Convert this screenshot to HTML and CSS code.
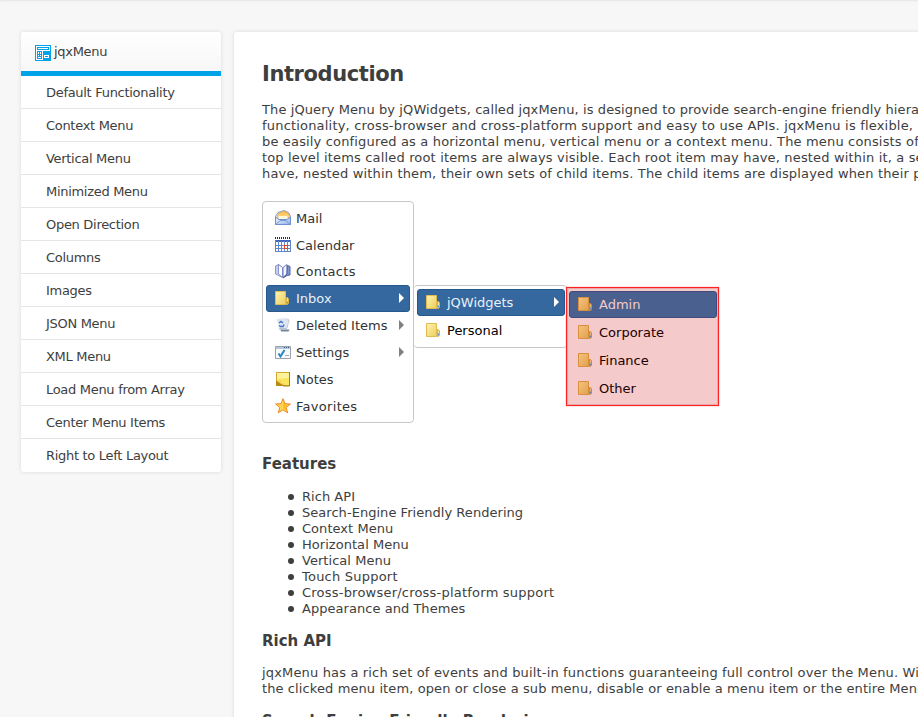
FILE: index.html
```html
<!DOCTYPE html>
<html lang="en">
<head>
<meta charset="utf-8">
<title>jqxMenu</title>
<link rel="stylesheet" href="styles.css">
</head>
<body>
<svg class="defs" width="0" height="0" aria-hidden="true">
  <defs>
    <linearGradient id="gold" x2="1" y2="1"><stop offset="0" stop-color="#fff3b0"/><stop offset="1" stop-color="#ecce5c"/></linearGradient>
    <linearGradient id="orange" x2="1" y2="1"><stop offset="0" stop-color="#f6c283"/><stop offset="1" stop-color="#e2a04a"/></linearGradient>
    <linearGradient id="blue" x2="1" y2="1"><stop offset="0" stop-color="#f4f8ff"/><stop offset="1" stop-color="#8fb1e8"/></linearGradient>
    <linearGradient id="flap" x2="0" y2="1"><stop offset="0" stop-color="#ffb733"/><stop offset="1" stop-color="#fff0c0"/></linearGradient>
    <symbol id="folder" viewBox="0 0 16 16">
      <path d="M.5 1.500h10v13H.5z" fill="url(#gold)" stroke="#dfbb55"/>
      <path d="M11.500 7.500h1l1 1.500v4l-1 1.500h-1z" fill="#fae99a" stroke="#d8b04a"/>
      <path d="M12.500 11.500v2" stroke="#4a9ad8"/>
    </symbol>
    <symbol id="folder-orange" viewBox="0 0 16 16">
      <path d="M.5 1.500h10v13H.5z" fill="url(#orange)" stroke="#d88f3e"/>
      <path d="M11.500 7.500h1l1 1.500v4l-1 1.500h-1z" fill="#eebb7c" stroke="#cf8638"/>
      <path d="M12.500 11.500v2" stroke="#5a7fa8"/>
    </symbol>
  </defs>
</svg>
<div class="page">
  <nav class="sidebar">
    <div class="sidebar-head">
      <svg width="16" height="16" viewBox="0 0 16 16" shape-rendering="crispEdges"><path fill="#00a2e8" d="M0 0h16v16H0z"/><path fill="#fff" d="M1 1h14v5h-14zM1 6h7v9h-7zM9 9h6v5H9z"/><path fill="#00a2e8" d="M2 2h12v3H2zM2 6h5v8H2zM8 9h7v5H8z"/><path fill="#fff" d="M3 3h10v1H3zM3 7h1v2H3zM5 7h1v2H5zM3 10h1v1H3zM5 10h1v1H5zM3 12h3v1H3zM9 10h5v3H9z"/><path fill="#00a2e8" d="M10 11h3v1h-3z"/></svg>
      <span>jqxMenu</span>
    </div>
    <ul class="side-list">
      <li>Default Functionality</li>
      <li>Context Menu</li>
      <li>Vertical Menu</li>
      <li>Minimized Menu</li>
      <li>Open Direction</li>
      <li>Columns</li>
      <li>Images</li>
      <li>JSON Menu</li>
      <li>XML Menu</li>
      <li>Load Menu from Array</li>
      <li>Center Menu Items</li>
      <li>Right to Left Layout</li>
    </ul>
  </nav>
  <main class="content">
    <h1>Introduction</h1>
    <p class="intro"><span class="snug">The jQuery Menu by jQWidgets, called jqxMenu, is designed to provide search-engine friendly hierarchical</span><br><span class="roomy">functionality, cross-browser and cross-platform support and easy to use APIs. jqxMenu is flexible, and can</span><br>be easily configured as a horizontal menu, vertical menu or a context menu. The menu consists of items<br>top level items called root items are always visible. Each root item may have, nested within it, a set of<br>have, nested within them, their own sets of child items. The child items are displayed when their parent</p>
    <div class="menus">
      <ul class="menu root">
        <li><svg width="16" height="16" viewBox="0 0 16 16"><path d="M.5 6.500L3 2.500 9 .5l4.500 2 2 4v8H.5z" fill="#dce8fb" stroke="#7d97d3"/><path d="M2 7l2-4 5-2 4 2 1.500 4L8 11z" fill="url(#flap)" stroke="#e5a648" stroke-width=".6"/><path d="M4 6h8l1 3H3z" fill="#fff6dc"/><path d="M.5 7L4 9.500h8L15.500 7v7.500H.5z" fill="url(#blue)" stroke="#6f8fd0"/><path d="M1.500 14L5 10.500h6L14.500 14" fill="none" stroke="#7796d6"/></svg><span>Mail</span></li>
        <li><svg width="16" height="16" viewBox="0 0 16 16" shape-rendering="crispEdges"><path fill="#fff" d="M0 1h16v14H0z"/><path d="M0 1h16" stroke="#333" stroke-width="2" stroke-dasharray="1 1"/><path fill="#3d68ba" d="M0 3h16v2H0z"/><path d="M.5 3v11.500h15V3M3.500 4v10M6.500 4v10M9.500 4v10M12.500 4v10M0 8.500h16M0 11.500h16" fill="none" stroke="#6286cb"/><path d="M9.500 8.500h3v3h-3z" fill="#fff" stroke="#e04a20"/></svg><span>Calendar</span></li>
        <li class="wide"><svg width="16" height="16" viewBox="0 0 16 16"><path d="M.5 3l3-1.500 4 3v10l-4-2-3-1.500z" fill="#c6d0ef" stroke="#8a94c6"/><path d="M3.500 1.500l4 3v10L3.500 11z" fill="#fff" stroke="#8793c8"/><path d="M8 4.500l4-3v9.500l-4 3.500z" fill="#eef3ff" stroke="#6e7bb8"/><path d="M12.500 2.500l2.500 1v8.500l-3 .5-4 2.500 4-4z" fill="#8195cd" stroke="#56619d"/></svg><span>Contacts</span></li>
        <li class="selected"><svg width="16" height="16"><use href="#folder"/></svg><span>Inbox</span><i class="arrow"></i></li>
        <li><svg width="16" height="16" viewBox="0 0 16 16"><path d="M1.500 2l9-1 3 1.500-2 11.500H5z" fill="#dfe6f0"/><path d="M6 12.500h8.500l-1 2H6z" fill="#75839a"/><path d="M4 11h8l-1 2H5z" fill="#b5c0d0"/><path d="M4 6l2-1.500L8 6M4 8.500l1.500 1H8l1-2" fill="none" stroke="#3e72cc" stroke-width="1.500"/><path d="M12 2l2 1-2 8" stroke="#c2c8ce" fill="none"/></svg><span>Deleted Items</span><i class="arrow"></i></li>
        <li><svg width="16" height="16" viewBox="0 0 16 16"><path d="M.5 2.500h15v12H.5z" fill="#f8fafc" stroke="#9da2a8"/><path d="M1 3h14v2H1z" fill="#b4c8e0"/><path d="M9 3.500h1m1 0h1m1 0h1" stroke="#38577e"/><path d="M3.500 9.500l2 3 4-6.500" stroke="#2185c8" fill="none" stroke-width="2"/><path d="M10 11.500h4" stroke="#a1a8b2"/></svg><span>Settings</span><i class="arrow"></i></li>
        <li><svg width="16" height="16" viewBox="0 0 16 16"><path d="M1.500 1.500h13v13h-7l-6-4z" fill="#fae45d" stroke="#d0a92e"/><path d="M2 2h12v5L2 8z" fill="#fff19a"/><path d="M1 10h5l3 5H1z" fill="#b88b16"/><path d="M2 10l5 .5 1 3.500z" fill="#ffe763"/><path d="M14.500 1v14H8" fill="none" stroke="#ad7e16"/></svg><span>Notes</span></li>
        <li class="wide"><svg width="16" height="16" viewBox="0 0 16 16"><path d="M8 .7l2 5 5.400.3-4.200 3.500 1.500 5.300L8 11.800l-4.700 3 1.500-5.300L.6 6 6 5.700z" fill="#ffd750" stroke="#ec8424"/><path d="M8 3v7l4 3-1.500-4L13 7 9.500 6z" fill="#ffbb2e"/></svg><span>Favorites</span></li>
      </ul>
      <ul class="menu sub">
        <li class="selected"><svg width="16" height="16"><use href="#folder"/></svg><span>jQWidgets</span><i class="arrow"></i></li>
        <li><svg width="16" height="16"><use href="#folder"/></svg><span>Personal</span></li>
      </ul>
      <ul class="menu marked">
        <li class="selected"><svg width="16" height="16"><use href="#folder-orange"/></svg><span>Admin</span></li>
        <li><svg width="16" height="16"><use href="#folder-orange"/></svg><span>Corporate</span></li>
        <li><svg width="16" height="16"><use href="#folder-orange"/></svg><span>Finance</span></li>
        <li><svg width="16" height="16"><use href="#folder-orange"/></svg><span>Other</span></li>
      </ul>
    </div>
    <h2>Features</h2>
    <ul class="features">
      <li>Rich API</li>
      <li>Search-Engine Friendly Rendering</li>
      <li>Context Menu</li>
      <li>Horizontal Menu</li>
      <li>Vertical Menu</li>
      <li class="loose">Touch Support</li>
      <li class="loose">Cross-browser/cross-platform support</li>
      <li>Appearance and Themes</li>
    </ul>
    <h2>Rich API</h2>
    <p class="api">jqxMenu has a rich set of events and built-in functions guaranteeing full control over the Menu. With the API<br><span class="snug">the clicked menu item, open or close a sub menu, disable or enable a menu item or the entire Menu.</span></p>
    <h2>Search-Engine Friendly Rendering</h2>
  </main>
</div>
</body>
</html>
```
FILE: styles.css
```css
* { box-sizing: border-box; }
html, body { height: 100%; }
body {
  margin: 0;
  overflow: hidden;
  background: #f7f7f7;
  box-shadow: inset 0 2px 2px -1px #e6e6e6;
  color: #3e3e3e;
  font: 13px/16px Verdana, "DejaVu Sans", sans-serif;
}
ul { list-style: none; margin: 0; padding: 0; }
.defs { display: block; height: 0; }
.page { display: flex; align-items: flex-start; gap: 13px; height: 717px; padding: 32px 0 0 21px; overflow: hidden; }
.sidebar {
  flex: none;
  width: 200px;
  background: #fff;
  border-radius: 3px;
  box-shadow: 0 0 4px rgba(0, 0, 0, .12);
  letter-spacing: -.3px;
}
.sidebar-head {
  display: flex;
  align-items: center;
  gap: 3px;
  height: 44px;
  padding: 0 14px;
  border-bottom: 5px solid #00a2e8;
  border-radius: 3px 3px 0 0;
  background: linear-gradient(#fff, #f7f7f7);
}
.sidebar-head svg { position: relative; top: 1px; }
.side-list li {
  height: 33px;
  padding: 1px 0 0 25px;
  border-bottom: 1px solid #e5e5e5;
  line-height: 32px;
}
.side-list li:last-child { border-bottom: 0; }
.content {
  flex: none;
  width: 900px;
  padding: 29px 28px 28px;
  background: #fff;
  border-radius: 3px;
  box-shadow: 0 0 4px rgba(0, 0, 0, .12);
  white-space: nowrap;
}
h1 { margin: 0 0 14px; font-size: 21px; line-height: 27px; letter-spacing: -.4px; }
h2 { margin: 0 0 14px; font-size: 15px; line-height: 19px; }
p { margin: 0 0 14px; letter-spacing: .16px; }
.snug { letter-spacing: .1px; }
.roomy { letter-spacing: .19px; }
.intro { margin-bottom: 19px; }
.api { margin-bottom: 15px; }
.menus { display: flex; align-items: flex-start; margin-bottom: 32px; }
.menu {
  flex: none;
  width: 152px;
  padding: 3px;
  border: 1px solid #c7c7c7;
  border-radius: 4px;
  background: #fff;
  color: #333;
}
.menu li { display: flex; align-items: center; height: 28px; padding-left: 8px; border: 1px solid transparent; border-radius: 3px; }
.menu svg { flex: none; margin-right: 5px; position: relative; top: -1px; }
.root { height: 222px; padding-top: 3px; }
.root li { height: 26.8px; }
.root li:nth-child(n+5), .root li:nth-child(-n+2) { position: relative; top: .6px; }
.root .wide { letter-spacing: .3px; }
.arrow { margin: 0 5px 0 auto; border: 5px solid transparent; border-left-color: #808080; border-right: 0; position: relative; top: -1px; }
.menu .selected { height: 27px; background: #35689f; border-color: #28598d; color: #e8f0f8; }
.selected .arrow { border-left-color: #fff; }
.sub { width: 153px; height: 63px; margin-top: 84px; padding: 3px 2px 3px 3px; border-left: 0; border-right: 0; color: #000; }
.sub .selected, .marked .selected { margin-bottom: 1px; }
.marked { width: 153px; height: 119px; margin: 86px 0 0 -1px; padding: 3px 1px 3px 2px; border: 1px solid #f22; border-radius: 0; background: #f4caca; box-shadow: inset 0 0 0 1px #e9a9a9, 0 0 1px #f66; color: #200; }
.marked .selected { background: #4a618f; border-color: #404b7d; color: #f4caca; }
.features { margin-bottom: 15px; padding: 1px 0 0 26px; letter-spacing: .04px; }
.features li { display: flex; align-items: center; gap: 8px; }
.features li::before { content: ""; width: 6px; height: 6px; border-radius: 50%; background: #3e3e3e; }
.features .loose { letter-spacing: .22px; }
```
